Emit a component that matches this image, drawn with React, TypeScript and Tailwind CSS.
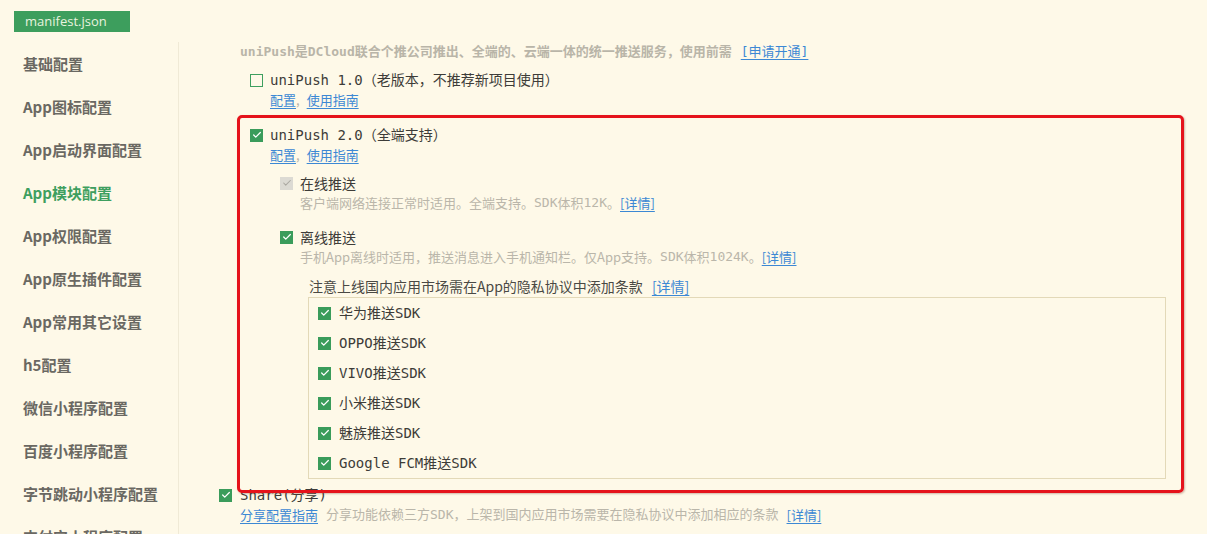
import { Check } from "lucide-react";

const mono = 'font-["DejaVu_Sans_Mono","Noto_Sans_CJK_SC",monospace]';
const sans = 'font-["Noto_Sans_CJK_SC","Noto_Sans",sans-serif]';

const menu = [
  "基础配置",
  "App图标配置",
  "App启动界面配置",
  "App模块配置",
  "App权限配置",
  "App原生插件配置",
  "App常用其它设置",
  "h5配置",
  "微信小程序配置",
  "百度小程序配置",
  "字节跳动小程序配置",
  "支付宝小程序配置",
];

const sdks = ["华为推送SDK", "OPPO推送SDK", "VIVO推送SDK", "小米推送SDK", "魅族推送SDK", "Google FCM推送SDK"];

function Box({ on = true, disabled = false }: { on?: boolean; disabled?: boolean }) {
  if (disabled)
    return (
      <span className="w-[13px] h-[13px] shrink-0 bg-[#dcdad3] flex items-center justify-center">
        <Check className="w-[10px] h-[10px] text-[#a9a7a0]" strokeWidth={2.5} />
      </span>
    );
  if (!on) return <span className="w-[13px] h-[13px] shrink-0 border border-[#3e9f5f] bg-[#fef9e8]" />;
  return (
    <span className="w-[13px] h-[13px] shrink-0 bg-[#3a9c5b] flex items-center justify-center">
      <Check className="w-[10px] h-[10px] text-white" strokeWidth={3} />
    </span>
  );
}

function Link({ children }: { children: React.ReactNode }) {
  return <span className="text-[#3c88d4] underline underline-offset-[3px]">{children}</span>;
}

export default function App() {
  return (
    <div className={`relative w-[1207px] h-[534px] overflow-hidden bg-[#fef9e8] ${sans}`}>
      {/* tab */}
      <div className="h-[42px] pt-[11px] pl-[14px]">
        <div className="w-[116px] h-[21px] bg-[#3d9e5d] text-[#e8f3df] text-[13px] leading-[21px] pl-[11px] font-['Open_Sans',sans-serif]">
          manifest.json
        </div>
      </div>

      <div className="flex">
        {/* sidebar */}
        <div className="w-[179px] shrink-0 border-r border-[#f0ead6] h-[492px] pt-[1px]">
          {menu.map((m, i) => (
            <div
              key={m}
              className={`h-[43px] flex items-center pl-[23px] text-[15px] font-bold ${
                i === 3 ? "text-[#3e9f5f]" : "text-[#6a6862]"
              }`}
            >
              {m}
            </div>
          ))}
        </div>

        {/* content */}
        <div className="flex-1 pr-[41px] text-[#3d3c38]">
          <div className={`mt-[1px] h-[18px] flex items-center pl-[61px] text-[13px] font-bold text-[#b9b5a8] ${mono}`}>
            uniPush是DCloud联合个推公司推出、全端的、云端一体的统一推送服务，使用前需
            <span className="ml-[9px] font-normal">
              <Link>[申请开通]</Link>
            </span>
          </div>

          <div className="mt-[9px] h-[20px] flex items-center gap-[7px] pl-[71px]">
            <Box on={false} />
            <span className={`text-[14px] ${mono}`}>uniPush 1.0（老版本，不推荐新项目使用）</span>
          </div>
          <div className="h-[20px] flex items-center pl-[91px] text-[13px]">
            <Link>配置</Link>
            <span className="text-[#b9b5a8] mr-[7px]">,</span>
            <Link>使用指南</Link>
          </div>

          <div className="mt-[15px] h-[20px] flex items-center gap-[7px] pl-[71px]">
            <Box />
            <span className={`text-[14px] ${mono}`}>uniPush 2.0（全端支持）</span>
          </div>
          <div className="h-[20px] flex items-center pl-[91px] text-[13px]">
            <Link>配置</Link>
            <span className="text-[#b9b5a8] mr-[7px]">,</span>
            <Link>使用指南</Link>
          </div>

          <div className="mt-[8px] h-[20px] flex items-center gap-[7px] pl-[101px]">
            <Box disabled />
            <span className="text-[14px]">在线推送</span>
          </div>
          <div className="h-[19px] flex items-center pl-[121px] text-[13px] text-[#bab6aa]">
            客户端网络连接正常时适用。全端支持。<span className={mono}>SDK</span>体积<span className={mono}>12K</span>。
            <Link>[详情]</Link>
          </div>

          <div className="mt-[15px] h-[20px] flex items-center gap-[7px] pl-[101px]">
            <Box />
            <span className="text-[14px]">离线推送</span>
          </div>
          <div className="h-[19px] flex items-center pl-[121px] text-[13px] text-[#bab6aa]">
            手机App离线时适用，推送消息进入手机通知栏。仅App支持。<span className={mono}>SDK</span>体积
            <span className={mono}>1024K</span>。<Link>[详情]</Link>
          </div>

          <div className="mt-[10px] h-[21px] flex items-center pl-[130px] text-[14px] text-[#4a4944]">
            注意上线国内应用市场需在App的隐私协议中添加条款
            <span className="ml-[9px]">
              <Link>[详情]</Link>
            </span>
          </div>
          <div className="ml-[129px] border border-[#e3d9b8]">
            {sdks.map((s) => (
              <div key={s} className="h-[30px] flex items-center gap-[8px] pl-[9px]">
                <Box />
                <span className={`text-[14px] ${mono}`}>{s}</span>
              </div>
            ))}
          </div>

          <div className="mt-[6px] h-[20px] flex items-center gap-[8px] pl-[40px]">
            <Box />
            <span className={`text-[14px] ${mono}`}>Share(分享)</span>
          </div>
          <div className="h-[19px] flex items-center pl-[61px] text-[13px] text-[#bab6aa]">
            <Link>分享配置指南</Link>
            <span className="ml-[8px]">
              分享功能依赖三方<span className={mono}>SDK</span>，上架到国内应用市场需要在隐私协议中添加相应的条款
            </span>
            <span className="ml-[8px]">
              <Link>[详情]</Link>
            </span>
          </div>
        </div>
      </div>

      {/* red annotation */}
      <div className="absolute left-[237px] top-[115px] w-[947px] h-[378px] border-[3px] border-[#e5131b] rounded-[5px] shadow-[1px_1px_2px_rgba(120,60,40,0.35)]" />
    </div>
  );
}
